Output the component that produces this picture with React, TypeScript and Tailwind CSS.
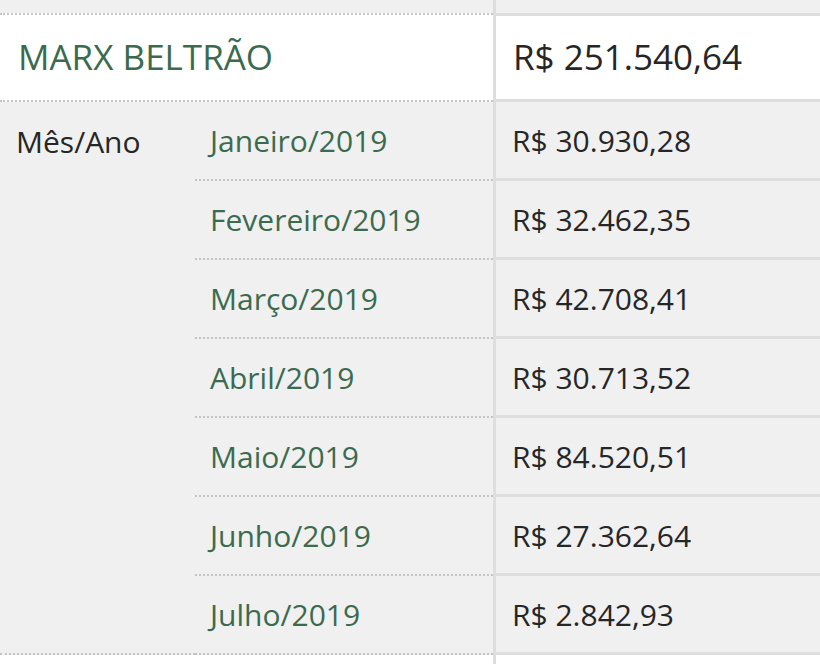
import React from "react"

const months = [
  ["Janeiro/2019", "R$ 30.930,28"],
  ["Fevereiro/2019", "R$ 32.462,35"],
  ["Março/2019", "R$ 42.708,41"],
  ["Abril/2019", "R$ 30.713,52"],
  ["Maio/2019", "R$ 84.520,51"],
  ["Junho/2019", "R$ 27.362,64"],
  ["Julho/2019", "R$ 2.842,93"],
]

export default function App() {
  return (
    <div className="w-[820px] h-[664px] overflow-hidden bg-[#f0f0f0] text-[#262626]" style={{ fontFamily: "'Open Sans', sans-serif" }}>
      {/* previous section tail */}
      <div className="flex h-[13px]">
        <div className="w-[493px]"></div>
        <div className="flex-1 border-l-[3px] border-[#dedede]"></div>
      </div>

      {/* deputado header */}
      <div className="flex h-[89px] bg-white">
        <div className="w-[493px] flex items-center pl-[18px] border-y-2 border-dotted border-[#c4c4c4] text-[#3b6b4e] text-[35px]">
          MARX BELTRÃO
        </div>
        <div className="flex-1 flex items-center pl-[17px] border-l-[3px] border-y-[3px] border-[#dedede] text-[35px]">
          R$ 251.540,64
        </div>
      </div>

      {/* months */}
      <div className="flex">
        <div className="w-[195px] pl-[16px] pt-[17px] text-[30px] border-b-2 border-dotted border-[#c4c4c4]">
          Mês/Ano
        </div>
        <div className="flex flex-col">
          {months.map(([m, v]) => (
            <div key={m} className="flex h-[79px]">
              <div className="w-[298px] flex items-center pl-[15px] border-b-2 border-dotted border-[#c4c4c4] text-[#3b6b4e] text-[30px]">
                {m}
              </div>
              <div className="w-[327px] flex items-center pl-[16px] border-l-[3px] border-b-[3px] border-[#dedede] text-[30px]">
                {v}
              </div>
            </div>
          ))}
        </div>
      </div>

      {/* next header */}
      <div className="flex h-[40px] bg-white">
        <div className="w-[493px]"></div>
        <div className="flex-1 border-l-[3px] border-[#dedede]"></div>
      </div>
    </div>
  )
}
